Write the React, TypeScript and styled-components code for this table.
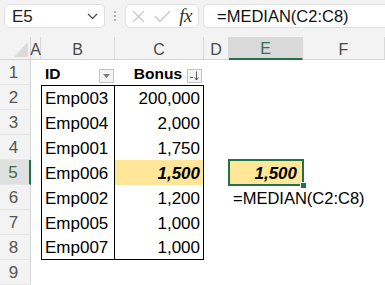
import React from "react";
import styled, { createGlobalStyle } from "styled-components";

const GlobalStyle = createGlobalStyle`
  html, body {
    margin: 0;
    padding: 0;
    background: #f3f3f3;
  }
  body {
    font-family: "Liberation Sans", Arial, sans-serif;
    color: #000;
  }
`;

const GREEN = "#217346";

const Page = styled.div`
  width: 385px;
  height: 285px;
  overflow: hidden;
  background: #f3f3f3;
  display: flex;
  flex-direction: column;
`;

/* ---------- formula bar ---------- */

const FormulaBar = styled.div`
  display: flex;
  align-items: stretch;
  height: 29px;
  margin: 4px 0 0 4px;
`;

const Box = styled.div`
  box-sizing: border-box;
  background: #fff;
  border: 1px solid #e0e0e0;
  border-radius: 5px;
  display: flex;
  align-items: center;
`;

const NameBox = styled(Box)`
  width: 101px;
  justify-content: space-between;
  padding: 1px 6px 0 7px;
  font-size: 17px;
  color: #222;
`;

const Grip = styled.div`
  width: 20px;
  display: flex;
  flex-direction: column;
  align-items: center;
  justify-content: center;
  gap: 2px;
`;

const GripDot = styled.span`
  width: 2px;
  height: 2px;
  border-radius: 1px;
  background: #9a9a9a;
`;

const IconGroup = styled(Box)`
  width: 74px;
  padding: 0 4px 0 6px;
  justify-content: space-between;
`;

const Fx = styled.span`
  font-family: "Liberation Serif", "DejaVu Serif", serif;
  font-style: italic;
  font-size: 19px;
  color: #333;
  margin-right: 2px;
  letter-spacing: -0.5px;
`;

const FormulaInput = styled(Box)`
  flex: 1;
  margin-left: 4px;
  margin-right: -8px;
  padding: 1px 0 0 13px;
  font-size: 16.5px;
  color: #111;
  white-space: nowrap;
`;

/* ---------- worksheet grid ---------- */

const Sheet = styled.div`
  margin-top: 9px;
  display: grid;
  grid-template-columns: 31px 10px 74px 89px 25px 74px 1fr;
  grid-template-rows: 23px;
  grid-auto-rows: 25px;
  background: #fff;
`;

const Corner = styled.div`
  background: #f3f3f3;
  border-right: 1px solid #d4d4d4;
  border-bottom: 1px solid #d4d4d4;
  box-sizing: border-box;
`;

const ColHead = styled.div<{ $active?: boolean }>`
  box-sizing: border-box;
  display: flex;
  justify-content: center;
  align-items: center;
  padding-top: 3px;
  font-size: 16px;
  white-space: nowrap;
  background: ${(p) => (p.$active ? "#dadada" : "#f3f3f3")};
  color: ${(p) => (p.$active ? "#3a6a50" : "#4a4a4a")};
  border-right: 1px solid #d8d8d8;
  border-bottom: ${(p) => (p.$active ? `2px solid ${GREEN}` : "1px solid #d4d4d4")};
  overflow: visible;
`;

const RowHead = styled.div<{ $active?: boolean }>`
  box-sizing: border-box;
  display: flex;
  justify-content: center;
  align-items: center;
  padding: 2px 3px 0 0;
  font-size: 17px;
  background: ${(p) => (p.$active ? "#e0e0e0" : "#f3f3f3")};
  color: ${(p) => (p.$active ? "#3a6a50" : "#555")};
  border-right: ${(p) => (p.$active ? `2px solid ${GREEN}` : "1px solid #d4d4d4")};
  border-bottom: 1px solid #e6e6e6;
`;

type Edge = {
  $left?: boolean;
  $right?: boolean;
  $top?: boolean;
  $bottom?: boolean;
};

const line = (on?: boolean) => (on ? "1px solid #000" : "none");

const Cell = styled.div<
  Edge & { $align?: "left" | "right"; $strong?: boolean; $fill?: string }
>`
  box-sizing: border-box;
  display: flex;
  align-items: center;
  justify-content: ${(p) => (p.$align === "right" ? "flex-end" : "flex-start")};
  padding: 2px 3px 0;
  font-size: 17px;
  white-space: nowrap;
  background: ${(p) => p.$fill ?? "transparent"};
  font-weight: ${(p) => (p.$strong ? 700 : 400)};
  font-style: ${(p) => (p.$strong ? "italic" : "normal")};
  border-left: ${(p) => line(p.$left)};
  border-right: ${(p) => line(p.$right)};
  border-top: ${(p) => line(p.$top)};
  border-bottom: ${(p) => line(p.$bottom)};
`;

const HeaderCell = styled.div<{ $align: "left" | "right" }>`
  box-sizing: border-box;
  display: flex;
  align-items: center;
  justify-content: ${(p) => (p.$align === "right" ? "flex-end" : "space-between")};
  gap: 5px;
  padding: ${(p) => (p.$align === "right" ? "2px 2px 0 0" : "2px 1px 0 4px")};
  font-size: 15.5px;
  font-weight: 700;
  white-space: nowrap;
`;

const FilterButton = styled.span`
  box-sizing: border-box;
  width: 15px;
  height: 14px;
  align-self: flex-end;
  margin-bottom: 2px;
  background: #f4f4f4;
  border: 1px solid #c4c4c4;
  display: flex;
  align-items: center;
  justify-content: center;
`;

const SelectedCell = styled(Cell)`
  position: relative;
  outline: 2px solid ${GREEN};
  outline-offset: -1px;
  padding-right: 6px;
  z-index: 1;
`;

const FillHandle = styled.span`
  position: absolute;
  right: -4px;
  bottom: -4px;
  width: 5px;
  height: 5px;
  background: ${GREEN};
  border: 1px solid #fff;
`;

const FormulaText = styled(Cell)`
  padding-left: 4px;
  font-size: 16.5px;
  overflow: visible;
`;

/* ---------- small drawings ---------- */

const Chevron = () => (
  <svg width="11" height="7" viewBox="0 0 11 7">
    <polyline points="1,1 5.5,5.5 10,1" fill="none" stroke="#444" strokeWidth="1.2" />
  </svg>
);

const CancelIcon = () => (
  <svg width="13" height="13" viewBox="0 0 13 13">
    <path d="M1 1 L12 12 M12 1 L1 12" stroke="#c8c8c8" strokeWidth="1.3" fill="none" />
  </svg>
);

const EnterIcon = () => (
  <svg width="17" height="13" viewBox="0 0 17 13">
    <polyline points="1,6 6,11.5 16,1" fill="none" stroke="#c8c8c8" strokeWidth="1.3" />
  </svg>
);

const CornerTriangle = () => (
  <svg width="31" height="23" viewBox="0 0 31 23">
    <polygon points="28,5 28,20 14,20" fill="#dadada" />
  </svg>
);

const DropArrow = () => (
  <svg width="7" height="4" viewBox="0 0 7 4">
    <polygon points="0,0 7,0 3.5,4" fill="#7a7a7a" />
  </svg>
);

const SortDescIcon = () => (
  <svg width="11" height="10" viewBox="0 0 11 10">
    <path d="M1 6.5 H4" stroke="#555" strokeWidth="1" />
    <path d="M7.5 0.5 V9" stroke="#555" strokeWidth="1" />
    <path d="M5.5 6.5 L7.5 9 L9.5 6.5" stroke="#555" strokeWidth="1" fill="none" />
  </svg>
);

/* ---------- data ---------- */

const columns = ["A", "B", "C", "D", "E", "F"];

const bonuses: [string, string][] = [
  ["Emp003", "200,000"],
  ["Emp004", "2,000"],
  ["Emp001", "1,750"],
  ["Emp006", "1,500"],
  ["Emp002", "1,200"],
  ["Emp005", "1,000"],
  ["Emp007", "1,000"],
];

const HIGHLIGHT = "#ffe699";
const FORMULA = "=MEDIAN(C2:C8)";

export default function App() {
  return (
    <Page>
      <GlobalStyle />
      <FormulaBar>
        <NameBox>
          <span>E5</span>
          <Chevron />
        </NameBox>
        <Grip>
          <GripDot />
          <GripDot />
          <GripDot />
        </Grip>
        <IconGroup>
          <CancelIcon />
          <EnterIcon />
          <Fx>fx</Fx>
        </IconGroup>
        <FormulaInput>{FORMULA}</FormulaInput>
      </FormulaBar>

      <Sheet>
        <Corner>
          <CornerTriangle />
        </Corner>
        {columns.map((c) => (
          <ColHead key={c} $active={c === "E"}>
            {c}
          </ColHead>
        ))}

        {/* row 1: table header */}
        <RowHead>1</RowHead>
        <Cell />
        <HeaderCell $align="left">
          <span>ID</span>
          <FilterButton>
            <DropArrow />
          </FilterButton>
        </HeaderCell>
        <HeaderCell $align="right">
          <span>Bonus</span>
          <FilterButton>
            <SortDescIcon />
          </FilterButton>
        </HeaderCell>
        <Cell />
        <Cell />
        <Cell />

        {bonuses.map(([id, bonus], i) => {
          const row = i + 2;
          const first = i === 0;
          const last = i === bonuses.length - 1;
          const isMedian = row === 5;
          return (
            <React.Fragment key={id}>
              <RowHead $active={isMedian}>{row}</RowHead>
              <Cell />
              <Cell $left $right $top={first} $bottom={last}>
                {id}
              </Cell>
              <Cell
                $align="right"
                $right
                $top={first}
                $bottom={last}
                $strong={isMedian}
                $fill={isMedian ? HIGHLIGHT : undefined}
              >
                {bonus}
              </Cell>
              <Cell />
              {isMedian ? (
                <SelectedCell $align="right" $strong $fill={HIGHLIGHT}>
                  1,500
                  <FillHandle />
                </SelectedCell>
              ) : row === 6 ? (
                <FormulaText>{FORMULA}</FormulaText>
              ) : (
                <Cell />
              )}
              <Cell />
            </React.Fragment>
          );
        })}

        <RowHead>9</RowHead>
        <Cell />
        <Cell />
        <Cell />
        <Cell />
        <Cell />
        <Cell />
      </Sheet>
    </Page>
  );
}
